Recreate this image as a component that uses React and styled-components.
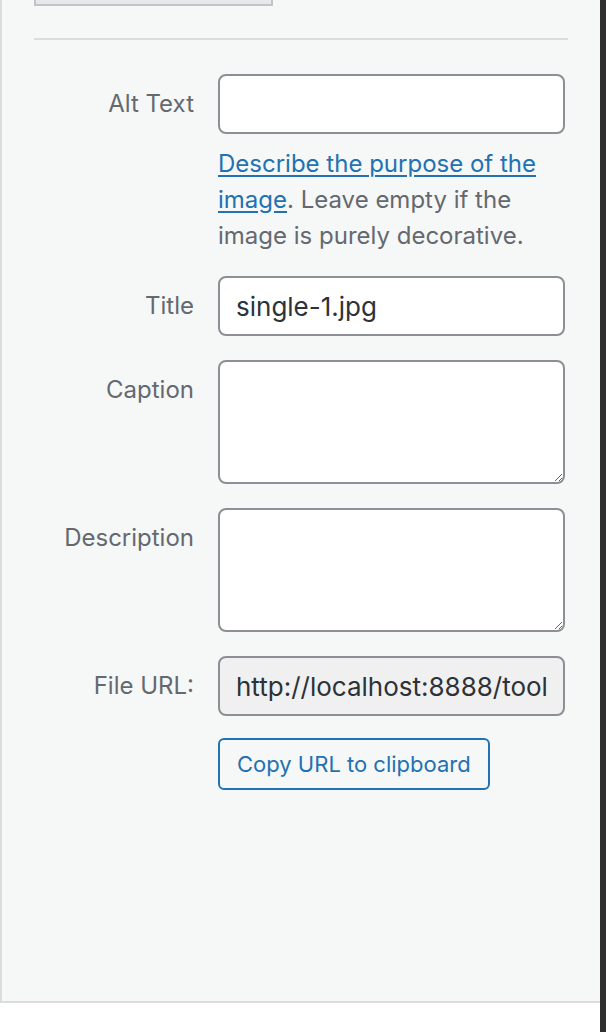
import React from 'react';
import styled, { createGlobalStyle } from 'styled-components';

const GlobalStyle = createGlobalStyle`
  html, body {
    margin: 0;
    padding: 0;
    background: #fff;
  }
  body {
    font-family: Inter, "Noto Sans", "Liberation Sans", sans-serif;
    -webkit-font-smoothing: antialiased;
  }
`;

// Whole frame: sidebar panel plus the dark strip on the right
const Frame = styled.div`
  display: flex;
  width: 606px;
  height: 1032px;
  overflow: hidden;
`;

const Panel = styled.div`
  flex: 1;
  height: 1001px;
  display: flex;
  flex-direction: column;
  background: #f6f7f7;
  border-left: 2px solid #dcdcde;
  border-bottom: 2px solid #dcdcde;
  padding: 0 32px 0 32px;
`;

const DarkStrip = styled.div`
  width: 6px;
  background: #2f2f2f;
`;

// Bottom of the thumbnail box that is cut off by the top of the view
const ThumbEdge = styled.div`
  width: 235px;
  height: 4px;
  background: #e6e9ec;
  border: 2px solid #c3c4c7;
  border-top: none;
`;

const Divider = styled.hr`
  width: 534px;
  height: 2px;
  margin: 32px 0 34px;
  border: none;
  background: #dcdcde;
`;

const Form = styled.div`
  display: flex;
  flex-direction: column;
  gap: 24px;
`;

const Row = styled.div`
  display: grid;
  grid-template-columns: 160px 347px;
  column-gap: 24px;
  align-items: start;
  margin-bottom: ${p => (p.$tight ? '-2px' : '0')};
`;

const Label = styled.label`
  font-size: 24px;
  line-height: 60px;
  color: #646970;
  text-align: right;
`;

const Field = styled.div`
  display: flex;
  flex-direction: column;
`;

const TextInput = styled.input`
  box-sizing: border-box;
  width: 347px;
  height: 60px;
  padding: 0 16px;
  border: 2px solid #8c8f94;
  border-radius: 8px;
  background: ${p => (p.readOnly ? '#f0f0f1' : '#fff')};
  font-family: inherit;
  font-size: 26px;
  color: #2c3338;
  outline: none;
`;

const TextArea = styled.textarea`
  box-sizing: border-box;
  width: 347px;
  height: 124px;
  padding: 12px 16px;
  border: 2px solid #8c8f94;
  border-radius: 8px;
  background: #fff;
  font-family: inherit;
  font-size: 26px;
  color: #2c3338;
  resize: vertical;
  outline: none;
  display: block;
`;

const Help = styled.p`
  margin: 12px 0 -2px;
  font-size: 24px;
  line-height: 36px;
  color: #646970;

  a {
    color: #2271b1;
    text-decoration: underline;
    text-underline-offset: 3px;
  }
`;

const CopyButton = styled.button`
  justify-self: start;
  height: 52px;
  padding: 0 17px;
  border: 2px solid #2271b1;
  border-radius: 6px;
  background: #f6f7f7;
  font-family: inherit;
  font-size: 22px;
  color: #2271b1;
  cursor: pointer;
`;

const App = () => {
  return (
    <Frame>
      <GlobalStyle />
      <Panel>
        <ThumbEdge />
        <Divider />
        <Form>
          <Row>
            <Label>Alt Text</Label>
            <Field>
              <TextInput type="text" defaultValue="" />
              <Help>
                <a href="#alt">Describe the purpose of the image</a>. Leave empty if the
                image is purely decorative.
              </Help>
            </Field>
          </Row>
          <Row>
            <Label>Title</Label>
            <TextInput type="text" defaultValue="single-1.jpg" />
          </Row>
          <Row>
            <Label>Caption</Label>
            <TextArea />
          </Row>
          <Row>
            <Label>Description</Label>
            <TextArea />
          </Row>
          <Row $tight>
            <Label>File URL:</Label>
            <TextInput
              type="text"
              readOnly
              defaultValue="http://localhost:8888/tools/wp-content/uploads/2023/05/single-1.jpg"
            />
          </Row>
          <Row>
            <span />
            <CopyButton>Copy URL to clipboard</CopyButton>
          </Row>
        </Form>
      </Panel>
      <DarkStrip />
    </Frame>
  );
};

export default App;
